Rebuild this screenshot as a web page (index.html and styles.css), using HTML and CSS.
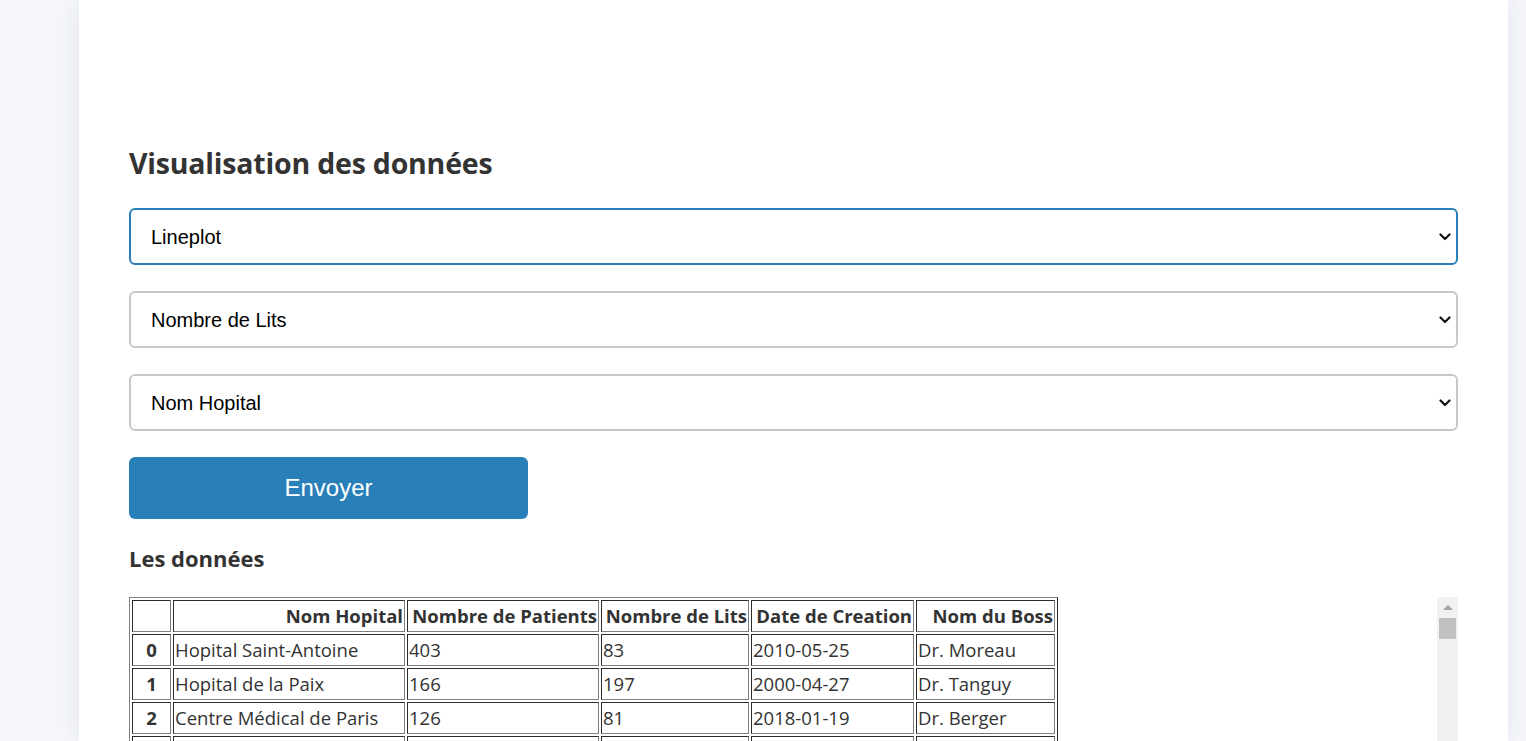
FILE: index.html
```html
<!DOCTYPE html>
<html lang="fr">
<head>
<meta charset="utf-8">
<title>Visualisation des données</title>
<link rel="stylesheet" href="styles.css">
</head>
<body>
<div class="page">
  <main class="card">
    <h2 class="title">Visualisation des données</h2>
    <form class="form">
      <div class="select-wrap">
        <select class="select select-active">
          <option>Lineplot</option>
          <option>Barplot</option>
          <option>Scatterplot</option>
        </select>
        <svg class="chevron" width="12" height="8" viewBox="0 0 12 8"><path d="M1.5 1.5 L6 6 L10.5 1.5" fill="none" stroke="#111" stroke-width="2.2" stroke-linecap="round" stroke-linejoin="round"/></svg>
      </div>
      <div class="select-wrap">
        <select class="select">
          <option>Nombre de Lits</option>
          <option>Nombre de Patients</option>
        </select>
        <svg class="chevron" width="12" height="8" viewBox="0 0 12 8"><path d="M1.5 1.5 L6 6 L10.5 1.5" fill="none" stroke="#111" stroke-width="2.2" stroke-linecap="round" stroke-linejoin="round"/></svg>
      </div>
      <div class="select-wrap">
        <select class="select">
          <option>Nom Hopital</option>
          <option>Date de Creation</option>
        </select>
        <svg class="chevron" width="12" height="8" viewBox="0 0 12 8"><path d="M1.5 1.5 L6 6 L10.5 1.5" fill="none" stroke="#111" stroke-width="2.2" stroke-linecap="round" stroke-linejoin="round"/></svg>
      </div>
      <button type="button" class="btn">Envoyer</button>
    </form>
    <h3 class="subtitle">Les données</h3>
    <div class="data-area">
      <div class="table-wrap">
        <table class="data">
          <thead>
            <tr class="head-row">
              <th class="c-idx"></th>
              <th class="c-name">Nom Hopital</th>
              <th class="c-pat">Nombre de Patients</th>
              <th class="c-lits">Nombre de Lits</th>
              <th class="c-date">Date de Creation</th>
              <th class="c-boss">Nom du Boss</th>
            </tr>
          </thead>
          <tbody>
            <tr><th>0</th><td>Hopital Saint-Antoine</td><td>403</td><td>83</td><td>2010-05-25</td><td>Dr. Moreau</td></tr>
            <tr><th>1</th><td>Hopital de la Paix</td><td>166</td><td>197</td><td>2000-04-27</td><td>Dr. Tanguy</td></tr>
            <tr><th>2</th><td>Centre Médical de Paris</td><td>126</td><td>81</td><td>2018-01-19</td><td>Dr. Berger</td></tr>
            <tr><th>3</th><td>Clinique du Parc</td><td>288</td><td>142</td><td>2005-09-12</td><td>Dr. Lefebvre</td></tr>
            <tr><th>4</th><td>Hopital Saint-Louis</td><td>354</td><td>210</td><td>1998-11-03</td><td>Dr. Martin</td></tr>
            <tr><th>5</th><td>Clinique des Lilas</td><td>97</td><td>64</td><td>2012-06-30</td><td>Dr. Dubois</td></tr>
            <tr><th>6</th><td>Hopital Necker</td><td>412</td><td>175</td><td>2003-02-14</td><td>Dr. Girard</td></tr>
            <tr><th>7</th><td>Centre Hospitalier Sud</td><td>231</td><td>118</td><td>2015-08-21</td><td>Dr. Roux</td></tr>
          </tbody>
        </table>
      </div>
      <div class="scrollbar" aria-hidden="true">
        <div class="sb-up"><span class="sb-arrow"></span></div>
        <div class="sb-thumb"></div>
      </div>
    </div>
  </main>
</div>
</body>
</html>
```
FILE: styles.css
```css
html, body {
  margin: 0;
  padding: 0;
}
body {
  background: #f5f7fb;
  overflow: hidden;
}
.page {
  padding-left: 79px;
  height: 741px;
}
.card {
  width: 1429px;
  box-sizing: border-box;
  height: 741px;
  background: #ffffff;
  box-shadow: 0 0 26px rgba(30, 40, 80, 0.09);
  padding: 143px 50px 0 50px;
  font-family: "Open Sans", "Segoe UI", sans-serif;
  color: #333333;
  overflow: hidden;
}
.title {
  margin: 0;
  font-size: 28.5px;
  line-height: 40px;
  font-weight: 700;
  color: #333333;
  letter-spacing: -0.2px;
}
.form {
  margin-top: 25px;
  display: flex;
  flex-direction: column;
  gap: 26px;
}
.select-wrap {
  position: relative;
}
.select {
  appearance: none;
  -webkit-appearance: none;
  display: block;
  width: 100%;
  height: 57px;
  box-sizing: border-box;
  border: 2px solid #c6c8ca;
  border-radius: 6px;
  background: #ffffff;
  padding: 0 40px 0 20px;
  font-family: "Liberation Sans", Arial, sans-serif;
  font-size: 20px;
  color: #000000;
  outline: none;
}
.select-active {
  border-color: #2980b9;
}
.chevron {
  position: absolute;
  right: 7px;
  top: 25px;
  pointer-events: none;
}
.btn {
  width: 399px;
  height: 62px;
  border: none;
  border-radius: 6px;
  background: #2980b9;
  color: #ffffff;
  font-family: "Liberation Sans", Arial, sans-serif;
  font-size: 24px;
  padding: 0;
  cursor: pointer;
}
.subtitle {
  margin: 24px 0 0 0;
  font-size: 22px;
  line-height: 30px;
  font-weight: 700;
  color: #333333;
}
.data-area {
  margin-top: 24px;
  display: flex;
  justify-content: space-between;
  height: 300px;
}
.table-wrap {
  overflow: hidden;
}
.data {
  border: 1px outset #808080;
  border-spacing: 2px;
  font-size: 18.5px;
  line-height: 26px;
  color: #333333;
}
.data th,
.data td {
  border: 1px inset #808080;
  padding: 2px 1px;
  white-space: nowrap;
}
.head-row th {
  text-align: right;
}
.data tbody th {
  text-align: center;
}
.data td {
  text-align: left;
}
.c-idx { width: 35px; }
.c-name { width: 228px; }
.c-pat { width: 188px; }
.c-lits { width: 144px; }
.c-date { width: 159px; }
.c-boss { width: 135px; }
.scrollbar {
  width: 21px;
  background: #f1f1f1;
  display: flex;
  flex-direction: column;
  align-items: center;
}
.sb-up {
  height: 21px;
  width: 21px;
  display: flex;
  align-items: center;
  justify-content: center;
}
.sb-arrow {
  width: 0;
  height: 0;
  border-left: 5px solid transparent;
  border-right: 5px solid transparent;
  border-bottom: 5px solid #a3a3a3;
}
.sb-thumb {
  width: 17px;
  height: 21px;
  background: #c1c1c1;
}
```
